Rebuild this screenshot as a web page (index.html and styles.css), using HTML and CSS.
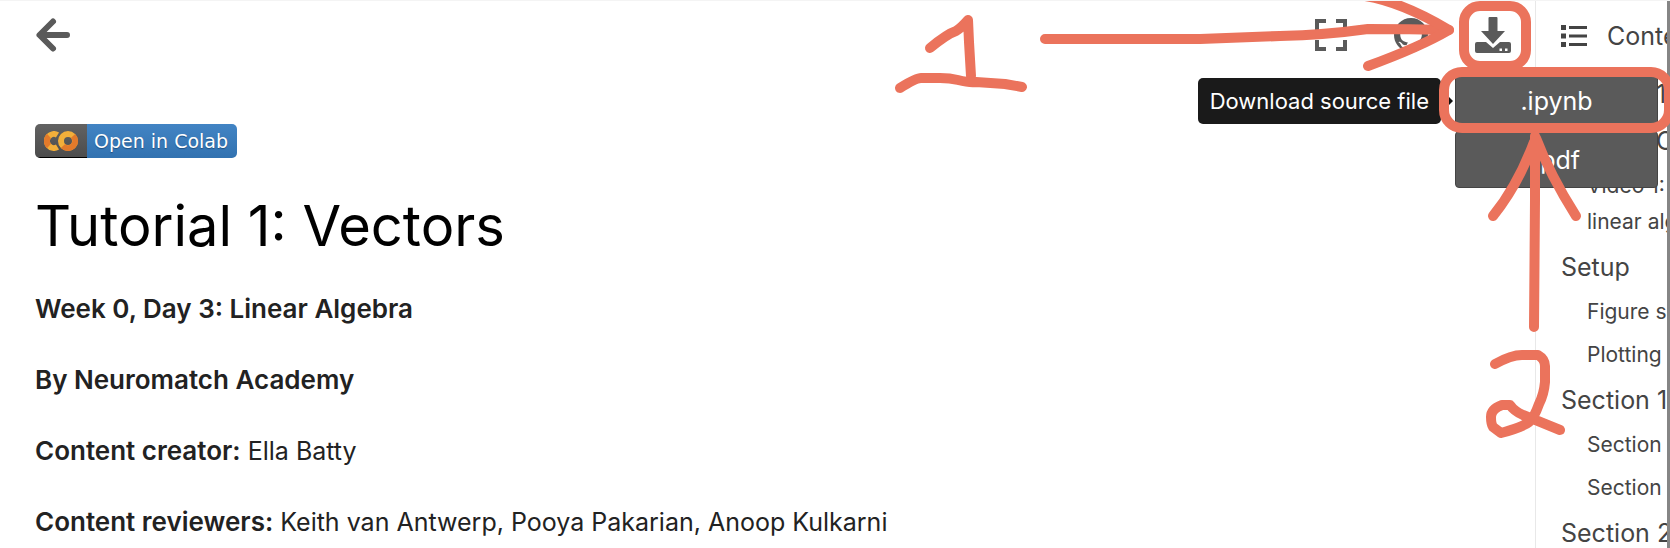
FILE: index.html
```html
<!DOCTYPE html>
<html lang="en">
<head>
<meta charset="utf-8">
<title>Tutorial 1: Vectors</title>
<link rel="stylesheet" href="styles.css">
</head>
<body>
<div class="page">
  <main class="main">
    <header class="topbar">
      <button class="icon-button" type="button" aria-label="Toggle navigation">
        <svg width="36" height="36" viewBox="0 0 36 36" fill="none" stroke="currentColor" stroke-width="6" stroke-linecap="round" stroke-linejoin="round"><path d="M18 4.500 4.500 18 18 31.500M5 18h27"/></svg>
      </button>
      <div class="actions">
        <button class="icon-button" type="button" aria-label="Fullscreen mode">
          <svg width="32" height="32" viewBox="0 0 32 32" fill="none" stroke="currentColor" stroke-width="4"><path d="M11 2H2v9M21 2h9v9M2 21v9h9M30 21v9h-9"/></svg>
        </button>
        <button class="icon-button" type="button" aria-label="Source repository">
          <svg width="34" height="34" viewBox="0 0 16 16" fill="currentColor"><path d="M8 0C3.580 0 0 3.580 0 8c0 3.540 2.290 6.530 5.470 7.590.4.070.55-.17.55-.38 0-.19-.01-.82-.01-1.490-2.010.37-2.530-.49-2.690-.94-.09-.23-.48-.94-.82-1.130-.28-.15-.68-.52-.01-.53.63-.01 1.080.58 1.230.82.72 1.210 1.870.87 2.330.66.07-.52.28-.87.51-1.070-1.780-.2-3.640-.89-3.640-3.950 0-.87.31-1.590.82-2.150-.08-.2-.36-1.020.08-2.120 0 0 .67-.21 2.200.82.64-.18 1.320-.27 2-.27s1.360.09 2 .27c1.530-1.040 2.200-.82 2.200-.82.44 1.100.16 1.920.08 2.120.51.56.82 1.270.82 2.150 0 3.070-1.870 3.750-3.650 3.950.29.25.54.73.54 1.480 0 1.070-.01 1.930-.01 2.200 0 .21.15.46.55.38A8.010 8.010 0 0 0 16 8c0-4.420-3.580-8-8-8z"/></svg>
        </button>
        <div class="download">
          <button class="icon-button" type="button" aria-label="Download this page" aria-expanded="true">
            <svg width="36" height="36" viewBox="0 0 36 36" fill="currentColor"><path d="M14.500 0h7q1 0 1 1v13H30L18 27 6 14h7.500V1q0-1 1-1z"/><path fill-rule="evenodd" d="M2 25h9l7 6 7-6h9q2 0 2 2v7q0 2-2 2H2q-2 0-2-2v-7q0-2 2-2zm22.500 6.500v2.500h2.500v-2.500zm5.500 0v2.500h2.500v-2.500z"/></svg>
          </button>
          <div class="menu">
            <button class="menu-item" type="button">.ipynb</button>
            <button class="menu-item" type="button">.pdf</button>
            <div class="tooltip" role="tooltip">Download source file</div>
          </div>
        </div>
      </div>
    </header>
    <article class="content">
      <a class="badge" href="#colab">
        <span class="badge-logo"><svg width="34" height="20" viewBox="0 0 34 20" fill="none" stroke-width="6"><path d="M13.500 4A7 7 0 1 0 13.500 16" stroke="#f2af3a"/><path d="M5 5a7 7 0 0 0 0 10" stroke="#e27a2b"/><circle cx="24" cy="10" r="7" stroke="#f2af3a"/><path d="M29 5A7 7 0 0 1 19 15" stroke="#e27a2b"/></svg></span>
        <span class="badge-text">Open in Colab</span>
      </a>
      <h1>Tutorial 1: Vectors</h1>
      <p><strong>Week 0, Day 3: Linear Algebra</strong></p>
      <p><strong>By Neuromatch Academy</strong></p>
      <p><strong>Content creator:</strong> Ella Batty</p>
      <p><strong>Content reviewers:</strong> Keith van Antwerp, Pooya Pakarian, Anoop Kulkarni</p>
    </article>
  </main>
  <nav class="toc" aria-label="Contents">
    <div class="toc-title">
      <svg width="26" height="22" viewBox="0 0 26 22" fill="currentColor"><path d="M0 0h5v5H0zM0 8.500h5v5H0zM0 17h5v5H0zM8 1h18v3H8zM8 9.500h18v3H8zM8 18h18v3H8z"/></svg>
      <span>Contents</span>
    </div>
    <ul>
      <li><a href="#t1">Tutorial 1: Vectors</a></li>
      <li><a href="#objectives">Tutorial Objectives</a></li>
      <li class="sub"><a href="#video1">Video 1: Why<br>linear algebra?</a></li>
      <li><a href="#setup">Setup</a></li>
      <li class="sub"><a href="#figure">Figure settings</a></li>
      <li class="sub"><a href="#plotting">Plotting functions</a></li>
      <li><a href="#s1">Section 1: Vectors</a></li>
      <li class="sub"><a href="#s11">Section 1.1</a></li>
      <li class="sub"><a href="#s12">Section 1.2</a></li>
      <li><a href="#s2">Section 2: Operations</a></li>
    </ul>
  </nav>
  <svg class="marks" width="1670" height="548" viewBox="0 0 1670 548" fill="none" stroke="currentColor" stroke-width="10" stroke-linecap="round" stroke-linejoin="round" aria-hidden="true">
    <path d="M930 48Q947 34 956 31 961 28 968 20L969 42 971 76"/>
    <path d="M900 88Q916 78 921 78H940Q950 78 958 80 970 83 976 82L1005 84 1022 87"/>
    <path d="M1045 39H1200L1280 36Q1325 35 1368 29 1410 29 1449 30"/>
    <path d="M1365-4Q1402 2 1449 30 1420 47 1368 66"/>
    <rect x="1464" y="6" width="62" height="60" rx="16"/>
    <rect x="1444" y="72" width="225" height="56" rx="18"/>
    <path d="M1535 136V200L1534 327M1493 216Q1518 185 1534 142M1536 138Q1550 175 1576 216"/>
    <path d="M1495 364Q1511 355 1522 355H1538Q1545 359 1545 366V382Q1544 394 1539 404 1534 418 1529 422 1523 427 1501 433L1493 427Q1491 424 1491 417 1491 409 1502 405H1510Q1514 411 1523 415L1560 430"/>
  </svg>
</div>
</body>
</html>
```
FILE: styles.css
```css
* {
  box-sizing: border-box;
}

body {
  margin: 0;
  color: #222;
  background: #fff;
  font-family: Inter, "Liberation Sans", sans-serif;
  font-size: 25px;
}

.page {
  position: relative;
  display: grid;
  grid-template-columns: minmax(0, 1fr) 135px;
  height: 100vh;
  overflow: hidden;
  border-top: 1px solid #f4f4f4;
}

.main {
  min-width: 0;
}

.topbar {
  display: flex;
  justify-content: space-between;
  align-items: center;
  height: 68px;
  padding: 0 24px 0 35px;
}

.actions {
  display: flex;
  align-items: center;
  gap: 47px;
}

.icon-button {
  display: block;
  padding: 0;
  border: 0;
  color: #5a5a5a;
  background: none;
}

.icon-button svg {
  display: block;
}

.download {
  position: relative;
}

.menu {
  position: absolute;
  z-index: 1;
  top: 55px;
  left: -20px;
  width: 203px;
}

.menu-item {
  display: block;
  width: 100%;
  height: 57px;
  margin-bottom: 2px;
  border: 1px solid #444;
  border-radius: 4px;
  color: #fff;
  background: #5a5a5a;
  font: inherit;
}

.tooltip {
  position: absolute;
  top: 6px;
  right: calc(100% + 14px);
  padding: 0 12px;
  border-radius: 5px;
  color: #fff;
  background: #1a1a1a;
  font-size: 22px;
  line-height: 46px;
  white-space: nowrap;
}

.tooltip::after {
  content: "";
  position: absolute;
  top: 11px;
  left: 100%;
  border: 12px solid transparent;
  border-left-color: #111;
  border-right: 0;
}

.content {
  padding: 55px 35px 0;
}

.badge {
  display: flex;
  width: fit-content;
  height: 34px;
  overflow: hidden;
  border-radius: 5px;
  color: #fff;
  text-decoration: none;
}

.badge-logo {
  display: flex;
  align-items: center;
  justify-content: center;
  width: 52px;
  border-bottom: 1px solid #000;
  background: linear-gradient(#626262, #4c4c4c);
}

.badge-text {
  padding: 0 9px 0 7px;
  background: linear-gradient(#4284c4, #3272b0);
  font-family: "DejaVu Sans", sans-serif;
  font-size: 19px;
  line-height: 34px;
  text-shadow: 0 1px 1px #1f4f80;
}

h1 {
  margin: 32px 0 26px;
  color: #000;
  font-size: 56px;
  font-weight: 400;
  line-height: 72px;
}

p {
  margin: 0 0 29px;
  line-height: 42px;
  white-space: nowrap;
}

strong {
  font-size: 26px;
  font-weight: 600;
}

.toc {
  overflow: hidden;
  border-left: 1px solid #e8e8e8;
  border-right: 3px solid #858585;
  color: #444;
  white-space: nowrap;
}

.toc-title {
  display: flex;
  align-items: center;
  gap: 20px;
  height: 70px;
  padding-left: 25px;
}

.toc-title svg {
  flex: none;
}

.toc ul {
  margin: 0;
  padding: 0 0 0 25px;
  list-style: none;
}

.toc li {
  line-height: 47px;
}

.toc .sub {
  padding: 3px 0 4px 26px;
  font-size: 21px;
  line-height: 36px;
}

.toc a {
  color: inherit;
  text-decoration: none;
}

.marks {
  position: absolute;
  z-index: 2;
  top: -1px;
  right: 0;
  color: #eb735c;
  pointer-events: none;
}
```
